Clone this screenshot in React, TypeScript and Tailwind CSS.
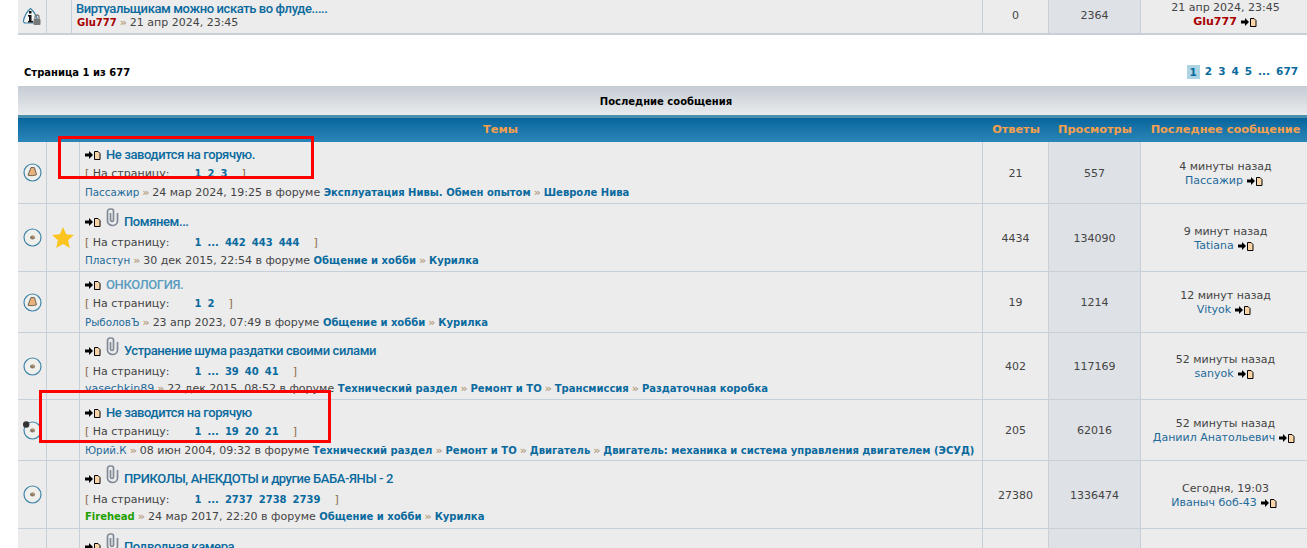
const verdana = { fontFamily: '"DejaVu Sans", Verdana, sans-serif' };
const titleFont = { fontFamily: 'Roboto, "Liberation Sans", Arial, sans-serif' };

function NewPost() {
  return (
    <svg width="17" height="10" viewBox="0 0 17 10" className="inline-block shrink-0">
      <path d="M0 3.500h4V1l4 4-4 4V6.500H0z" fill="#000" />
      <path d="M9.500 1.500h3.500l2 2v6h-5.500z" fill="#fbd5a8" stroke="#000" />
    </svg>
  );
}

function Clip() {
  return (
    <svg width="13" height="19" viewBox="0 0 13 19" className="shrink-0 relative -top-[5px] mr-[1px]">
      <path
        d="M4.500 5v7a1.500 1.500 0 0 0 3 0V3a2 2 0 0 0-2-2H4a2.500 2.500 0 0 0-2.500 2.500V13a5 4.500 0 0 0 10 0V5"
        fill="none"
        stroke="#808994"
        strokeWidth="1.700"
      />
    </svg>
  );
}

function Topic({ big, dot }: { big?: boolean; dot?: boolean }) {
  return (
    <svg width="19" height="19" viewBox="0 0 19 19">
      <circle cx="9.500" cy="9.500" r="8.500" fill="#efefec" stroke="#3f84a8" strokeWidth="1.200" />
      {big ? (
        <path d="M8 4.500l3.500.2 2 7c-2 1-6 1.300-8.500.5z" fill="#e8b27a" stroke="#6d6257" strokeWidth="1" />
      ) : (
        <>
          <ellipse cx="9.500" cy="9.500" rx="2.500" ry="2" fill="#8a7a68" />
          <circle cx="10.500" cy="8.500" r="1" fill="#c9a27a" />
        </>
      )}
      {dot && <circle cx="3.200" cy="3.500" r="3.200" fill="#333" />}
    </svg>
  );
}

function Star() {
  return (
    <svg width="22" height="21" viewBox="0 0 22 21">
      <path d="M11 0l3.200 7.200 7.800.8-5.900 5.200 1.700 7.700L11 17l-6.800 3.900 1.700-7.700L0 8l7.800-.8z" fill="#fcc41f" />
    </svg>
  );
}

function InfoLock() {
  return (
    <svg width="20" height="20" viewBox="0 0 20 20">
      <path
        d="M8.500 1.500C5 4.500 2.500 9 1.500 13.500c-.2 1.500.5 2.500 2 2.500h10c1.500 0 2.200-1 2-2.500C14.500 9 12 4.500 8.500 1.500z"
        fill="#f4f5f5"
        stroke="#3f84a8"
        strokeWidth="1.200"
      />
      <rect x="7" y="4" width="2.500" height="2.500" fill="#111" />
      <path d="M6 8h3.500v6H11v1.500H6V14h1V9.500H6z" fill="#111" />
      <path d="M13 12v-2a2 2 0 0 1 4 0v2" fill="none" stroke="#777" strokeWidth="1.300" />
      <rect x="11.500" y="12" width="7" height="6" rx="1" fill="#777" />
    </svg>
  );
}

const Sep = () => <span className="text-[#b9a184] font-bold mx-[3px]">»</span>;

type Row = {
  h: string;
  big?: boolean;
  dot?: boolean;
  star?: boolean;
  clip?: boolean;
  title: string;
  titleClass?: string;
  pages: string[];
  author: string;
  authorClass?: string;
  date: string;
  forums: string[];
  replies: string;
  views: string;
  when: string;
  last: string;
};

const rows: Row[] = [
  {
    h: 'h-[62px]',
    big: true,
    title: 'Не заводится на горячую.',
    pages: ['1', '2', '3'],
    author: 'Пассажир',
    date: '24 мар 2024, 19:25',
    forums: ['Эксплуатация Нивы. Обмен опытом', 'Шевроле Нива'],
    replies: '21',
    views: '557',
    when: '4 минуты назад',
    last: 'Пассажир',
  },
  {
    h: 'h-[68px]',
    star: true,
    clip: true,
    title: 'Помянем...',
    pages: ['1', '...', '442', '443', '444'],
    author: 'Пластун',
    date: '30 дек 2015, 22:54',
    forums: ['Общение и хобби', 'Курилка'],
    replies: '4434',
    views: '134090',
    when: '9 минут назад',
    last: 'Tatiana',
  },
  {
    h: 'h-[61px]',
    big: true,
    title: 'ОНКОЛОГИЯ.',
    titleClass: 'text-[#5a9cc0]',
    pages: ['1', '2'],
    author: 'РыболовЪ',
    date: '23 апр 2023, 07:49',
    forums: ['Общение и хобби', 'Курилка'],
    replies: '19',
    views: '1214',
    when: '12 минут назад',
    last: 'Vityok',
  },
  {
    h: 'h-[67px]',
    clip: true,
    title: 'Устранение шума раздатки своими силами',
    pages: ['1', '...', '39', '40', '41'],
    author: 'vasechkin89',
    authorClass: 'text-[11px] text-[#1f6a9a]',
    date: '22 дек 2015, 08:52',
    forums: ['Технический раздел', 'Ремонт и ТО', 'Трансмиссия', 'Раздаточная коробка'],
    replies: '402',
    views: '117169',
    when: '52 минуты назад',
    last: 'sanyok',
  },
  {
    h: 'h-[61px]',
    dot: true,
    title: 'Не заводится на горячую',
    pages: ['1', '...', '19', '20', '21'],
    author: 'Юрий.К',
    date: '08 июн 2004, 09:32',
    forums: ['Технический раздел', 'Ремонт и ТО', 'Двигатель', 'Двигатель: механика и система управления двигателем (ЭСУД)'],
    replies: '205',
    views: '62016',
    when: '52 минуты назад',
    last: 'Даниил Анатольевич',
  },
  {
    h: 'h-[68px]',
    clip: true,
    title: 'ПРИКОЛЫ, АНЕКДОТЫ и другие БАБА-ЯНЫ - 2',
    pages: ['1', '...', '2737', '2738', '2739'],
    author: 'Firehead',
    authorClass: 'font-bold text-[10px] text-[#22a000]',
    date: '24 мар 2017, 22:20',
    forums: ['Общение и хобби', 'Курилка'],
    replies: '27380',
    views: '1336474',
    when: 'Сегодня, 19:03',
    last: 'Иваныч боб-43',
  },
];

function TitleLine({ r }: { r: Pick<Row, 'clip' | 'title' | 'titleClass'> }) {
  return (
    <div className={`flex items-center h-[20px] gap-[4px] ${r.clip ? 'mt-[8px]' : 'mt-[3px]'}`}>
      <NewPost />
      {r.clip && <Clip />}
      <span
        className={`text-[13px] font-medium tracking-[-0.4px] ${r.titleClass ?? 'text-[#0a6a9e]'}`}
        style={titleFont}
      >
        {r.title}
      </span>
    </div>
  );
}

function TopicRow({ r }: { r: Row }) {
  return (
    <div className={`grid grid-cols-[29px_33px_903px_66px_92px_169px] ${r.h} bg-[#ececec] border-b border-[#c7d0d8] text-[11px] text-[#444]`}>
      <div className="border-r border-[#c7d0d8] flex items-center justify-center">
        <Topic big={r.big} dot={r.dot} />
      </div>
      <div className="border-r border-[#c7d0d8] flex items-center justify-center">{r.star && <Star />}</div>
      <div className="border-r border-[#c7d0d8] pl-[5px] overflow-hidden">
        <TitleLine r={r} />
        <div className={`whitespace-pre leading-[16px] ${r.clip ? 'mt-[3px]' : 'mt-[1px]'}`}>
          <span className="text-[#8a6a4a]">[</span> На страницу:
          <span className="inline-block w-[25px]" />
          {r.pages.map((p, i) => (
            <span key={i} className="font-bold text-[10px] text-[#0a6a9e] mr-[6px]">
              {p}
            </span>
          ))}
          <span className="ml-[8px] text-[#8a6a4a]">]</span>
        </div>
        <div className={`whitespace-nowrap leading-[16px] ${r.clip ? 'mt-[1px]' : 'mt-[2px]'}`}>
          <span className={r.authorClass ?? 'text-[10.300px] text-[#1f6a9a]'}>{r.author}</span>
          <Sep />
          {r.date} в форуме{' '}
          {r.forums.map((f, i) => (
            <span key={f}>
              {i > 0 && <Sep />}
              <span className="font-bold text-[10px] text-[#0a6a9e]">{f}</span>
            </span>
          ))}
        </div>
      </div>
      <div className="border-r border-[#c7d0d8] flex items-center justify-center pt-[3px]">{r.replies}</div>
      <div className="border-r border-[#c7d0d8] bg-[#dee1e5] flex items-center justify-center pt-[3px]">{r.views}</div>
      <div className="flex flex-col items-center justify-center leading-[14px] pt-[2px]">
        <span>{r.when}</span>
        <span className="flex items-center gap-[4px] text-[#1f6a9a] -translate-x-[1px]">
          {r.last}
          <NewPost />
        </span>
      </div>
    </div>
  );
}

export default function App() {
  return (
    <div className="relative h-[548px] w-[1307px] overflow-hidden bg-white pl-[18px]" style={verdana}>
      {/* previous block, only its last row is visible */}
      <div className="grid grid-cols-[29px_25px_911px_66px_92px_169px] w-[1292px] h-[35px] bg-[#ececec] border-b-2 border-[#c7d0d8] text-[11px] text-[#444]">
        <div className="border-r border-[#c7d0d8] flex items-center justify-center">
          <InfoLock />
        </div>
        <div className="border-r border-[#c7d0d8]" />
        <div className="border-r border-[#c7d0d8] pl-[4px] pt-[1px] flex flex-col">
          <span className="text-[13px] font-medium tracking-[-0.4px] text-[#0a6a9e] leading-[15px]" style={titleFont}>
            Виртуальщикам можно искать во флуде.....
          </span>
          <div className="leading-[14px] pl-[1px]">
            <span className="font-bold text-[10px] text-[#a80000]">Glu777</span>
            <Sep />
            21 апр 2024, 23:45
          </div>
        </div>
        <div className="border-r border-[#c7d0d8] flex items-center justify-center">0</div>
        <div className="border-r border-[#c7d0d8] bg-[#dee1e5] flex items-center justify-center">2364</div>
        <div className="flex flex-col items-center leading-[14px] pt-[1px]">
          <span>21 апр 2024, 23:45</span>
          <span className="flex items-center gap-[4px] font-bold text-[#a80000]">
            Glu777
            <NewPost />
          </span>
        </div>
      </div>

      <div className="flex items-center justify-between h-[51px] pl-[6px] pr-[8px] text-[10px] font-bold pt-[23px]">
        <span className="text-black">Страница 1 из 677</span>
        <div className="flex items-center gap-[4px] text-[10.500px] text-[#0a6a9e]">
          <span className="bg-[#add4e4] px-[3px] leading-[14px]">1</span>
          <span className="px-[1px]">2</span>
          <span className="px-[1px]">3</span>
          <span className="px-[1px]">4</span>
          <span className="px-[1px]">5</span>
          <span className="px-[1px]">...</span>
          <span className="px-[1px]">677</span>
        </div>
      </div>

      <div className="w-[1296px]">
        <div className="h-[29px] pt-[2px] bg-gradient-to-b from-[#c5ccd4] to-[#e9ebed] flex items-center justify-center text-[10px] font-bold text-black">
          Последние сообщения
        </div>
        <div className="grid grid-cols-[965px_66px_92px_169px] h-[27px] bg-gradient-to-b from-[#06659c] to-[#2a86b8] border-t-[3px] border-[#4a8fae] items-center text-[11.300px] font-bold text-[#f5a04e] text-center">
          <span>Темы</span>
          <span>Ответы</span>
          <span>Просмотры</span>
          <span>Последнее сообщение</span>
        </div>
      </div>

      {rows.map((r) => (
        <TopicRow key={r.title} r={r} />
      ))}
      <div className="grid grid-cols-[29px_33px_903px_66px_92px_169px] h-[30px] bg-[#ececec] text-[11px]">
        <div className="border-r border-[#c7d0d8]" />
        <div className="border-r border-[#c7d0d8]" />
        <div className="border-r border-[#c7d0d8] pl-[5px]">
          <TitleLine r={{ clip: true, title: 'Подводная камера' }} />
        </div>
        <div className="border-r border-[#c7d0d8]" />
        <div className="border-r border-[#c7d0d8] bg-[#dee1e5]" />
        <div />
      </div>

      {/* red annotation boxes */}
      <div className="absolute left-[58px] top-[136px] w-[256px] h-[43px] border-[3px] border-[#ff0000]" />
      <div className="absolute left-[39px] top-[390px] w-[292px] h-[53px] border-[3px] border-[#ff0000]" />
    </div>
  );
}
